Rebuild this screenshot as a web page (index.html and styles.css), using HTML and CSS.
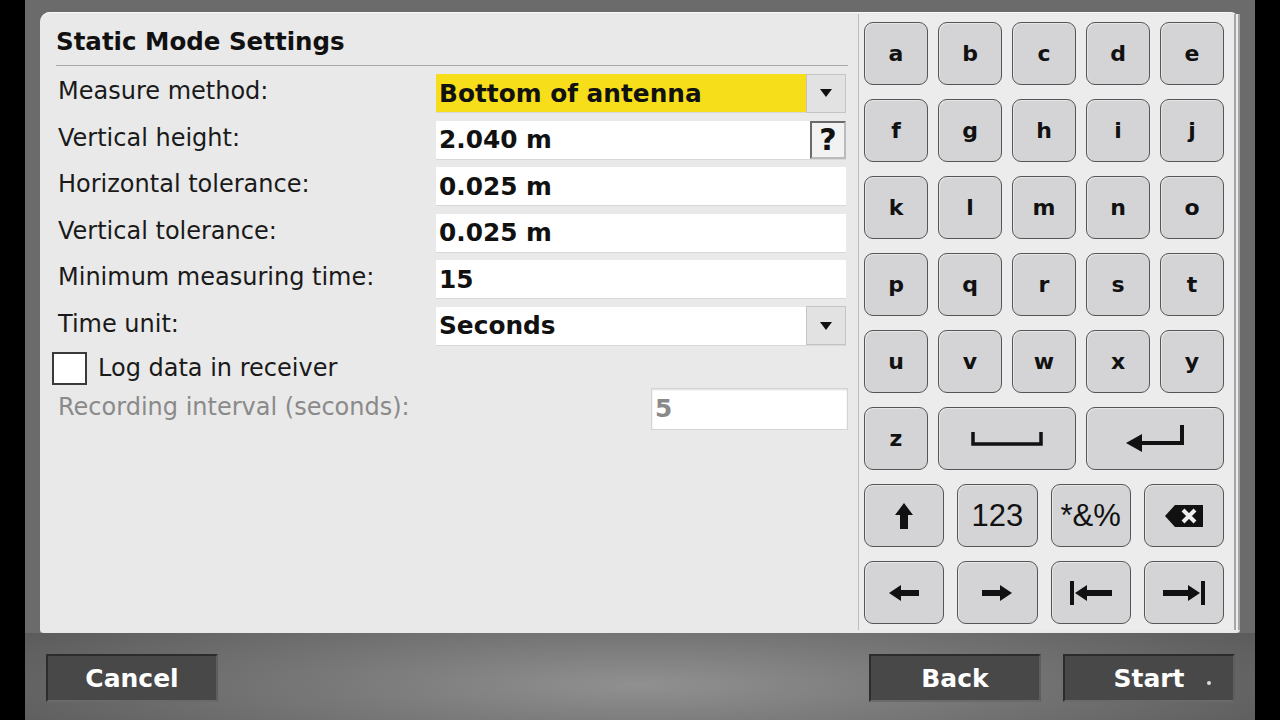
FILE: index.html
```html
<!DOCTYPE html>
<html lang="en">
<head>
    <meta charset="UTF-8">
    <title>Static Mode Settings</title>
    <link rel="stylesheet" href="styles.css">
</head>
<body>
    <div class="device">
        <div class="panel">
            <div class="form">
                <h1 class="title">Static Mode Settings</h1>
                <div class="rows">
                    <label class="label">Measure method:</label>
                    <div class="field selected">
                        <span class="value">Bottom of antenna</span>
                        <span class="drop"><svg width="14" height="10" viewBox="0 0 14 10"><path d="M1 1h12L7 9z" fill="#111"/></svg></span>
                    </div>

                    <label class="label">Vertical height:</label>
                    <div class="field">
                        <span class="value">2.040 m</span>
                        <span class="help">?</span>
                    </div>

                    <label class="label">Horizontal tolerance:</label>
                    <div class="field"><span class="value">0.025 m</span></div>

                    <label class="label">Vertical tolerance:</label>
                    <div class="field"><span class="value">0.025 m</span></div>

                    <label class="label">Minimum measuring time:</label>
                    <div class="field"><span class="value">15</span></div>

                    <label class="label">Time unit:</label>
                    <div class="field">
                        <span class="value">Seconds</span>
                        <span class="drop"><svg width="14" height="10" viewBox="0 0 14 10"><path d="M1 1h12L7 9z" fill="#111"/></svg></span>
                    </div>
                </div>

                <div class="check-row">
                    <span class="checkbox"></span>
                    <span class="check-label">Log data in receiver</span>
                </div>
                <div class="interval-row">
                    <span class="label dim">Recording interval (seconds):</span>
                    <div class="field small"><span class="value dim">5</span></div>
                </div>
            </div>

            <div class="keyboard">
                <div class="keys five">
                    <button class="key">a</button>
                    <button class="key">b</button>
                    <button class="key">c</button>
                    <button class="key">d</button>
                    <button class="key">e</button>
                </div>
                <div class="keys five">
                    <button class="key">f</button>
                    <button class="key">g</button>
                    <button class="key">h</button>
                    <button class="key">i</button>
                    <button class="key">j</button>
                </div>
                <div class="keys five">
                    <button class="key">k</button>
                    <button class="key">l</button>
                    <button class="key">m</button>
                    <button class="key">n</button>
                    <button class="key">o</button>
                </div>
                <div class="keys five">
                    <button class="key">p</button>
                    <button class="key">q</button>
                    <button class="key">r</button>
                    <button class="key">s</button>
                    <button class="key">t</button>
                </div>
                <div class="keys five">
                    <button class="key">u</button>
                    <button class="key">v</button>
                    <button class="key">w</button>
                    <button class="key">x</button>
                    <button class="key">y</button>
                </div>
                <div class="keys five">
                    <button class="key">z</button>
                    <button class="key wide">
                        <svg width="72" height="16" viewBox="0 0 72 16"><path d="M2 1v12h68V1" fill="none" stroke="#111" stroke-width="3.5"/></svg>
                    </button>
                    <button class="key wide">
                        <svg width="62" height="30" viewBox="0 0 62 30"><path d="M58 1v18H16" fill="none" stroke="#111" stroke-width="4"/><path d="M2 19l16-9v18z" fill="#111"/></svg>
                    </button>
                </div>
                <div class="keys four">
                    <button class="key">
                        <svg width="20" height="28" viewBox="0 0 20 28"><path d="M10 1L1 13h5v14h8V13h5z" fill="#111"/></svg>
                    </button>
                    <button class="key plain">123</button>
                    <button class="key plain">*&amp;%</button>
                    <button class="key">
                        <svg width="40" height="26" viewBox="0 0 40 26"><path d="M1 13L11 2h28v22H11z" fill="#111"/><path d="M19 7l12 12M31 7L19 19" stroke="#eee" stroke-width="4"/></svg>
                    </button>
                </div>
                <div class="keys four">
                    <button class="key">
                        <svg width="32" height="18" viewBox="0 0 32 18"><path d="M1 9l12-8v5h18v6H13v5z" fill="#111"/></svg>
                    </button>
                    <button class="key">
                        <svg width="32" height="18" viewBox="0 0 32 18"><path d="M31 9L19 1v5H1v6h18v5z" fill="#111"/></svg>
                    </button>
                    <button class="key">
                        <svg width="44" height="26" viewBox="0 0 44 26"><path d="M3 1v24" stroke="#111" stroke-width="4"/><path d="M6 13l12-8v5h25v6H18v5z" fill="#111"/></svg>
                    </button>
                    <button class="key">
                        <svg width="44" height="26" viewBox="0 0 44 26"><path d="M41 1v24" stroke="#111" stroke-width="4"/><path d="M38 13L26 5v5H1v6h25v5z" fill="#111"/></svg>
                    </button>
                </div>
            </div>
        </div>

        <div class="actions">
            <button class="action">Cancel</button>
            <div class="actions-right">
                <button class="action">Back</button>
                <button class="action start">Start <span class="dot"></span></button>
            </div>
        </div>
    </div>
</body>
</html>
```

FILE: styles.css
```css
* {
    box-sizing: border-box;
}
body {
    margin: 0;
    background-color: #000;
    font-family: "DejaVu Sans", Verdana, sans-serif;
}
.device {
    margin-left: 25px;
    width: 1230px;
    height: 720px;
    background-color: #6b6b6b;
    padding-top: 12px;
}
.panel {
    margin: 0 15px;
    height: 621px;
    background-color: #e9e9e9;
    border-radius: 10px 10px 4px 4px;
    display: flex;
    box-shadow: inset 0 1px 0 #fafafa, 0 2px 0 #8a8a8a;
}

/* settings form */
.form {
    width: 818px;
    padding: 0 10px 0 16px;
}
.title {
    margin: 0;
    padding: 15px 0 0;
    font-size: 24.5px;
    font-weight: bold;
    color: #111;
    border-bottom: 1px solid #a8a8a8;
    height: 54px;
}
.rows {
    display: grid;
    grid-template-columns: 380px 410px;
    grid-auto-rows: 39px;
    row-gap: 7.5px;
    margin-top: 8px;
    align-items: center;
}
.label {
    font-size: 24px;
    color: #1a1a1a;
    padding-left: 2px;
    padding-top: 3px;
    align-self: start;
}
.label.dim,
.value.dim {
    color: #8a8a8a;
}
.field {
    height: 39px;
    background-color: #fff;
    display: flex;
    align-items: center;
    border-bottom: 1px solid #d8d8d8;
}
.field.selected {
    background-color: #f6df1a;
}
.value {
    flex: 1;
    padding-left: 3px;
    font-size: 24.8px;
    font-weight: bold;
    color: #111;
}
.drop {
    width: 40px;
    height: 39px;
    background-color: #e2e2e2;
    border: 1px solid #c4c4c4;
    display: flex;
    align-items: center;
    justify-content: center;
}
.help {
    width: 36px;
    height: 38px;
    border: 2px solid #6a6a6a;
    border-right-color: #bbb;
    border-bottom-color: #bbb;
    background-color: #f2f2f2;
    font-size: 30px;
    font-weight: bold;
    color: #111;
    display: flex;
    align-items: center;
    justify-content: center;
}
.check-row {
    display: flex;
    align-items: center;
    margin-top: 6px;
    margin-left: -4px;
}
.checkbox {
    width: 35px;
    height: 33px;
    background-color: #fff;
    border: 2px solid #3a3a3a;
}
.check-label {
    margin-left: 11px;
    font-size: 24px;
    color: #1a1a1a;
}
.interval-row {
    display: flex;
    justify-content: space-between;
    align-items: center;
    margin-top: 3px;
}
.interval-row .label {
    align-self: center;
    padding-top: 0;
    margin-bottom: 4px;
}
.field.small {
    width: 197px;
    height: 42px;
    border: 1px solid #d4d4d4;
    box-shadow: inset 0 1px 2px #ddd;
}

/* on-screen keyboard */
.keyboard {
    width: 382px;
    margin-top: 2px;
    margin-bottom: 3px;
    border-left: 1px solid #bdbdbd;
    border-right: 6px double #a6a6a6;
    background-color: #ececec;
    padding: 8px 10px 0 5px;
    display: flex;
    flex-direction: column;
    gap: 14px;
}
.keys {
    display: grid;
    height: 63px;
}
.keys.five {
    grid-template-columns: repeat(5, 1fr);
    column-gap: 10px;
}
.keys.four {
    grid-template-columns: repeat(4, 1fr);
    column-gap: 13px;
}
.key {
    font-family: "DejaVu Sans", Verdana, sans-serif;
    font-size: 22px;
    font-weight: bold;
    color: #111;
    background-color: #d4d4d6;
    border: 1.5px solid #555;
    border-radius: 9px;
    box-shadow: inset 1px 1px 0 #e6e6e8;
    padding: 0;
    display: flex;
    align-items: center;
    justify-content: center;
}
.key.wide {
    grid-column: span 2;
}
.key.plain {
    font-family: "Liberation Sans", Arial, sans-serif;
    font-weight: normal;
    font-size: 31px;
}

/* bottom button bar */
.actions {
    height: 87px;
    display: flex;
    justify-content: space-between;
    padding: 21px 20px 0 21px;
    background: radial-gradient(ellipse 60% 120% at 50% 60%, #909090 0%, #777 45%, #5a5a5a 100%);
}
.actions-right {
    display: flex;
    gap: 22px;
}
.action {
    width: 172px;
    height: 48px;
    background-color: #484848;
    border: 2px solid #2c2c2c;
    border-bottom-color: #6a6a6a;
    border-right-color: #5e5e5e;
    color: #fff;
    font-family: "DejaVu Sans", Verdana, sans-serif;
    font-size: 25px;
    font-weight: bold;
    padding: 0;
}
.start {
    position: relative;
}
.dot {
    position: absolute;
    right: 22px;
    top: 25px;
    width: 4px;
    height: 4px;
    border-radius: 2px;
    background-color: #ddd;
}
```
